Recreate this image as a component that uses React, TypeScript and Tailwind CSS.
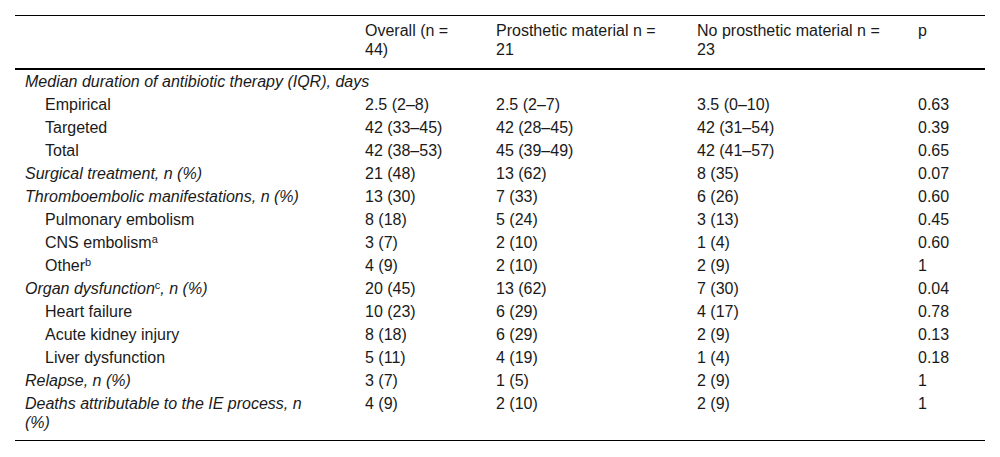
import React from 'react'

type Row = {
  label: React.ReactNode
  sub?: boolean
  heading?: boolean
  values?: string[]
  last?: boolean
}

const rows: Row[] = [
  { label: 'Median duration of antibiotic therapy (IQR), days', heading: true },
  { label: 'Empirical', sub: true, values: ['2.5 (2–8)', '2.5 (2–7)', '3.5 (0–10)', '0.63'] },
  { label: 'Targeted', sub: true, values: ['42 (33–45)', '42 (28–45)', '42 (31–54)', '0.39'] },
  { label: 'Total', sub: true, values: ['42 (38–53)', '45 (39–49)', '42 (41–57)', '0.65'] },
  { label: 'Surgical treatment, n (%)', heading: true, values: ['21 (48)', '13 (62)', '8 (35)', '0.07'] },
  { label: 'Thromboembolic manifestations, n (%)', heading: true, values: ['13 (30)', '7 (33)', '6 (26)', '0.60'] },
  { label: 'Pulmonary embolism', sub: true, values: ['8 (18)', '5 (24)', '3 (13)', '0.45'] },
  {
    label: (
      <>
        CNS embolism<sup className="text-[11px]">a</sup>
      </>
    ),
    sub: true,
    values: ['3 (7)', '2 (10)', '1 (4)', '0.60'],
  },
  {
    label: (
      <>
        Other<sup className="text-[11px]">b</sup>
      </>
    ),
    sub: true,
    values: ['4 (9)', '2 (10)', '2 (9)', '1'],
  },
  {
    label: (
      <>
        Organ dysfunction<sup className="text-[11px] not-italic">c</sup>, n (%)
      </>
    ),
    heading: true,
    values: ['20 (45)', '13 (62)', '7 (30)', '0.04'],
  },
  { label: 'Heart failure', sub: true, values: ['10 (23)', '6 (29)', '4 (17)', '0.78'] },
  { label: 'Acute kidney injury', sub: true, values: ['8 (18)', '6 (29)', '2 (9)', '0.13'] },
  { label: 'Liver dysfunction', sub: true, values: ['5 (11)', '4 (19)', '1 (4)', '0.18'] },
  { label: 'Relapse, n (%)', heading: true, values: ['3 (7)', '1 (5)', '2 (9)', '1'] },
  {
    label: (
      <>
        Deaths attributable to the IE process, n<br />(%)
      </>
    ),
    heading: true,
    values: ['4 (9)', '2 (10)', '2 (9)', '1'],
    last: true,
  },
]

export default function App() {
  return (
    <div className="bg-white w-[1000px] h-[457px] pt-[15px] px-[15px] text-[#1a1a1a] text-[16px] leading-[19px] font-['Liberation_Sans',Arial,sans-serif]">
      <table className="w-[970px] border-collapse table-fixed">
        <colgroup>
          <col className="w-[340px]" />
          <col className="w-[131px]" />
          <col className="w-[201px]" />
          <col className="w-[221px]" />
          <col className="w-[77px]" />
        </colgroup>
        <thead>
          <tr className="border-t border-black border-b-2">
            <th className="pl-[10px] pr-[15px] pt-[5px] pb-[9px] font-normal text-left align-top"></th>
            <th className="pl-[10px] pr-[15px] pt-[5px] pb-[9px] font-normal text-left align-top">Overall (n = 44)</th>
            <th className="pl-[10px] pr-[15px] pt-[5px] pb-[9px] font-normal text-left align-top">Prosthetic material n = 21</th>
            <th className="pl-[10px] pr-[15px] pt-[5px] pb-[9px] font-normal text-left align-top">No prosthetic material n = 23</th>
            <th className="pl-[10px] pr-[15px] pt-[5px] pb-[9px] font-normal text-left align-top">p</th>
          </tr>
        </thead>
        <tbody>
          {rows.map((row, i) => (
            <tr key={i} className={row.last ? 'border-b border-black' : ''}>
              <td
                colSpan={row.values ? 1 : 5}
                className={`pt-[2px] pr-[20px] align-top ${row.sub ? 'pl-[30px]' : 'pl-[10px]'} ${row.heading ? 'italic' : ''} ${row.last ? 'pb-[8px]' : 'pb-[2px]'}`}
              >
                {row.label}
              </td>
              {row.values?.map((v, j) => (
                <td key={j} className={`pl-[10px] pr-[15px] pt-[2px] align-top ${row.last ? 'pb-[8px]' : 'pb-[2px]'}`}>
                  {v}
                </td>
              ))}
            </tr>
          ))}
        </tbody>
      </table>
    </div>
  )
}
